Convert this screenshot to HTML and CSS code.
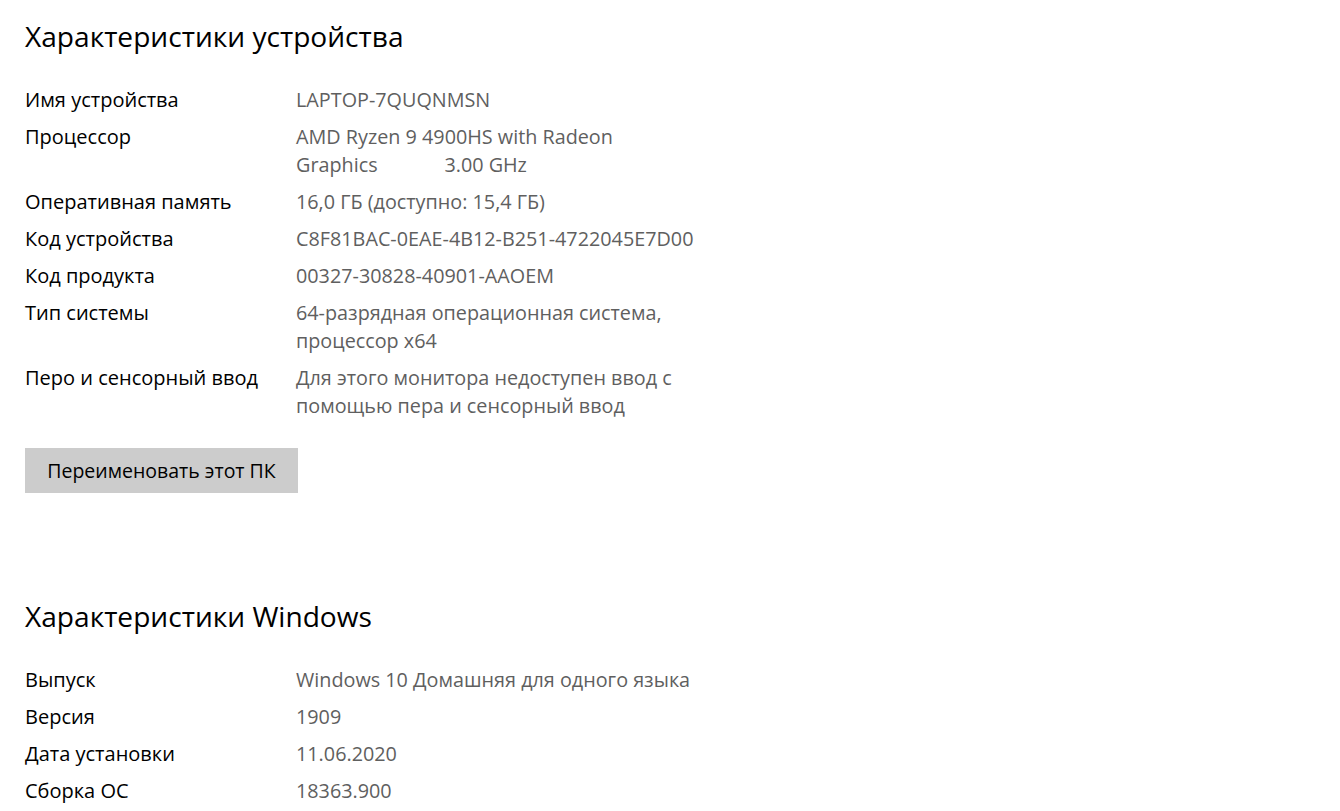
FILE: index.html
```html
<!DOCTYPE html>
<html lang="ru">
<head>
<meta charset="utf-8">
<title>О системе</title>
<link rel="stylesheet" href="styles.css">
</head>
<body>
<main class="page">
  <section class="section">
    <h2 class="title">Характеристики устройства</h2>
    <dl class="specs">
      <div class="row"><dt>Имя устройства</dt><dd>LAPTOP-7QUQNMSN</dd></div>
      <div class="row"><dt>Процессор</dt><dd>AMD Ryzen 9 4900HS with Radeon<br>Graphics             3.00 GHz</dd></div>
      <div class="row"><dt>Оперативная память</dt><dd>16,0 ГБ (доступно: 15,4 ГБ)</dd></div>
      <div class="row"><dt>Код устройства</dt><dd>C8F81BAC-0EAE-4B12-B251-4722045E7D00</dd></div>
      <div class="row"><dt>Код продукта</dt><dd>00327-30828-40901-AAOEM</dd></div>
      <div class="row"><dt>Тип системы</dt><dd>64-разрядная операционная система,<br>процессор x64</dd></div>
      <div class="row"><dt>Перо и сенсорный ввод</dt><dd>Для этого монитора недоступен ввод с<br>помощью пера и сенсорный ввод</dd></div>
    </dl>
    <button class="btn" type="button">Переименовать этот ПК</button>
  </section>
  <section class="section section-win">
    <h2 class="title">Характеристики Windows</h2>
    <dl class="specs">
      <div class="row"><dt>Выпуск</dt><dd>Windows 10 Домашняя для одного языка</dd></div>
      <div class="row"><dt>Версия</dt><dd>1909</dd></div>
      <div class="row"><dt>Дата установки</dt><dd>11.06.2020</dd></div>
      <div class="row"><dt>Сборка ОС</dt><dd>18363.900</dd></div>
    </dl>
  </section>
</main>
</body>
</html>
```

FILE: styles.css
```css
* { box-sizing: border-box; }
html, body { margin: 0; padding: 0; background: #ffffff; }
body {
  font-family: "Open Sans", "Noto Sans", "Liberation Sans", sans-serif;
  color: #000;
  overflow: hidden;
}
.page { padding: 14px 25px 0 25px; width: 1340px; height: 811px; }
.title {
  margin: 0;
  font-size: 28.1px;
  font-weight: 400;
  line-height: 44px;
  color: #000;
}
.specs { margin: 28px 0 0 0; padding: 0; }
.row {
  display: grid;
  grid-template-columns: 271px 1fr;
  margin-bottom: 9px;
}
.row dt, .row dd {
  margin: 0;
  font-size: 20px;
  line-height: 28px;
}
.row dt { color: #000; }
.row dd { color: #5f5f5f; font-size: 19.8px; white-space: pre-wrap; }
.btn {
  margin-top: 28px;
  height: 45px;
  width: 273px;
  border: none;
  border-radius: 0;
  background: #cccccc;
  color: #000;
  font-family: inherit;
  font-size: 19.5px;
  padding: 0;
  display: block;
}
.section-win { margin-top: 101px; }
```
